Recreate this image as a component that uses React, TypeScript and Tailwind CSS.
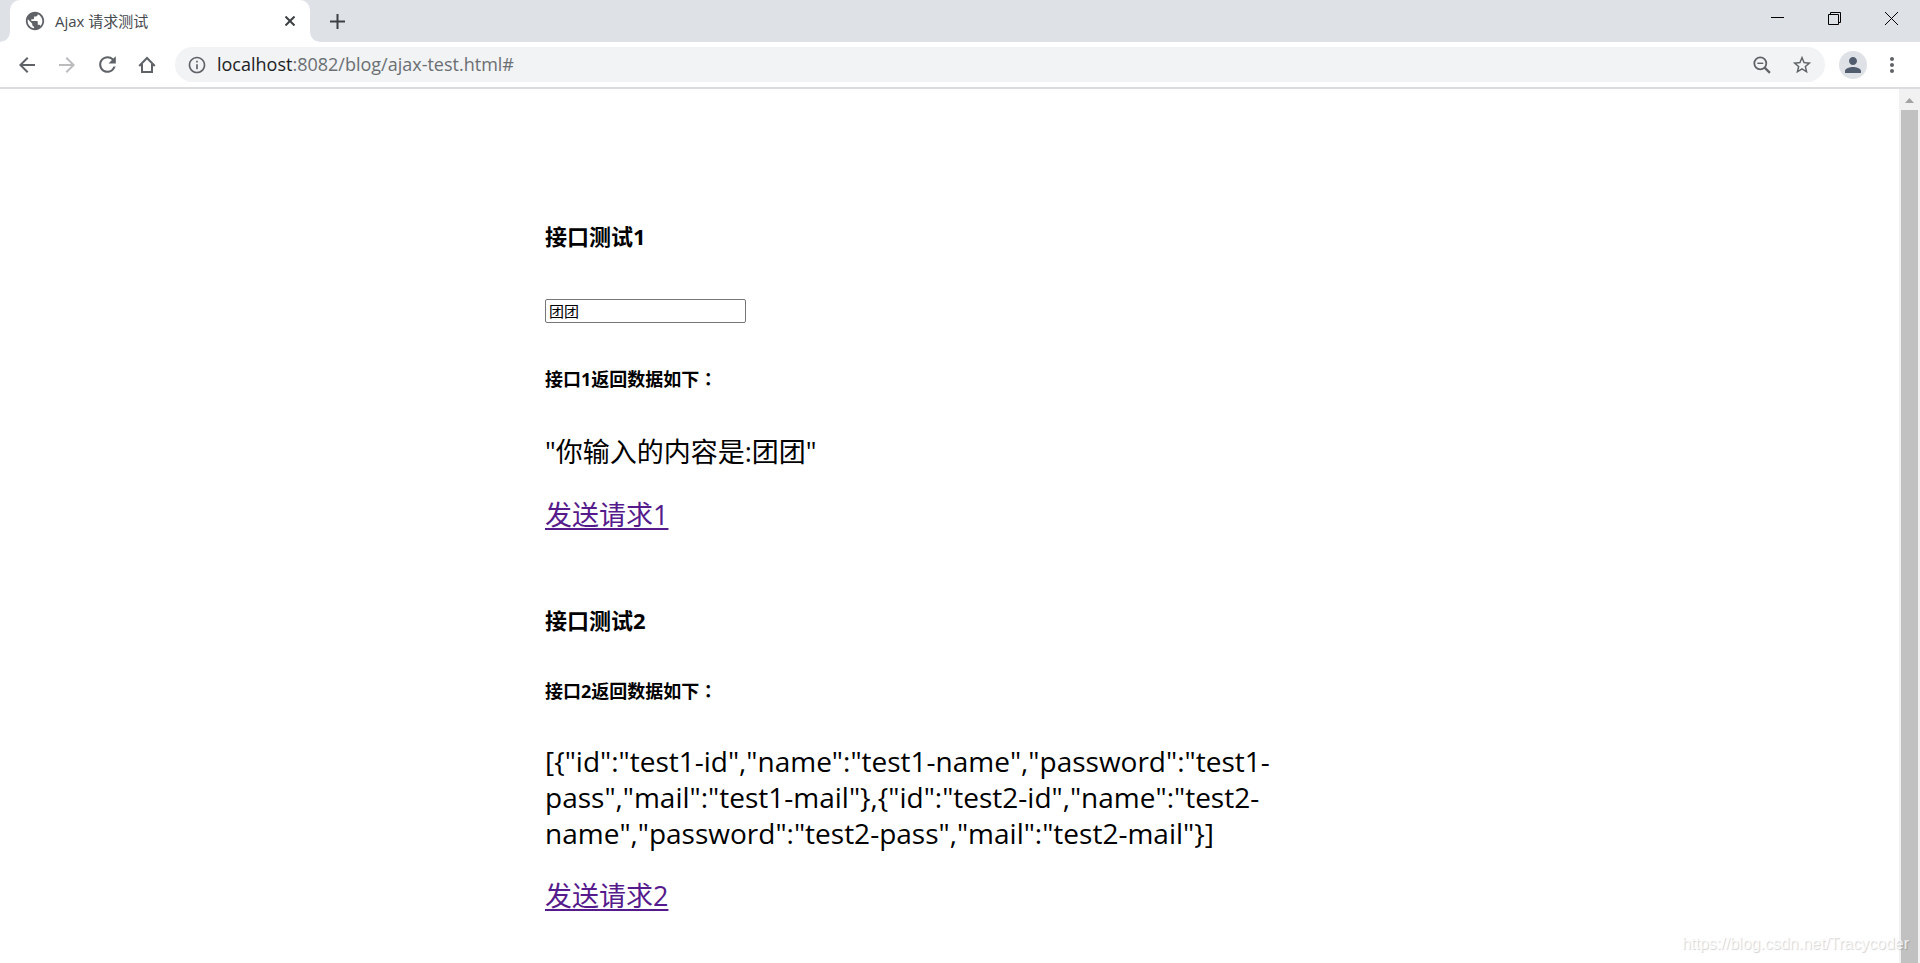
import { useState } from "react";
import type { ReactNode } from "react";
import {
  MdArrowBack,
  MdArrowForward,
  MdInfoOutline,
  MdMoreVert,
  MdOutlineStarBorder,
  MdPerson,
  MdPublic,
  MdRefresh,
} from "react-icons/md";

function IconButton({ label, children }: { label: string; children: ReactNode }) {
  return (
    <button
      type="button"
      aria-label={label}
      className="flex h-8 w-10 shrink-0 items-center justify-center text-[#5f6368]"
    >
      {children}
    </button>
  );
}

function TabStrip() {
  return (
    <header className="flex h-[42px] items-stretch bg-[#dee1e6]">
      <div className="w-[10px] bg-white">
        <div className="h-full rounded-br-[10px] bg-[#dee1e6]" />
      </div>
      <div className="bg-[#dee1e6]">
        <div className="flex h-full w-[300px] items-center gap-[9px] rounded-t-[10px] bg-white pr-[14px] pl-[14px]">
          <MdPublic size={22} className="shrink-0 text-[#5f6368]" />
          <span className="flex-1 text-[15px] leading-5 text-[#45494d]">Ajax 请求测试</span>
          <button type="button" aria-label="关闭标签页" className="p-[1px]">
            <svg viewBox="0 0 10 10" className="size-[10px]" stroke="#3c4043" strokeWidth="2" aria-hidden="true">
              <path d="M0.5 0.5 L9.5 9.5 M9.5 0.5 L0.5 9.5" />
            </svg>
          </button>
        </div>
      </div>
      <div className="w-[10px] bg-white">
        <div className="h-full rounded-bl-[10px] bg-[#dee1e6]" />
      </div>
      <button type="button" aria-label="打开新的标签页" className="flex w-[35px] items-center justify-center">
        <svg viewBox="0 0 15 15" className="size-[15px]" stroke="#3c4043" strokeWidth="2" aria-hidden="true">
          <path d="M7.5 0 V15 M0 7.5 H15" />
        </svg>
      </button>
      <div className="flex-1" />
      <div className="flex h-9 items-center">
        <button type="button" aria-label="最小化" className="flex w-[57px] justify-center">
          <svg viewBox="0 0 13 13" className="size-[13px]" stroke="#000" fill="none" aria-hidden="true">
            <path d="M0 5.5 H13" />
          </svg>
        </button>
        <button type="button" aria-label="还原" className="flex w-[57px] justify-center">
          <svg viewBox="0 0 13 13" className="size-[13px]" stroke="#000" fill="none" aria-hidden="true">
            <path d="M0.5 2.5 H10.5 V12.5 H0.5 Z M2.5 2.5 V0.5 H12.5 V10.5 H10.5" />
          </svg>
        </button>
        <button type="button" aria-label="关闭" className="flex w-[57px] justify-center">
          <svg viewBox="0 0 13 13" className="size-[13px]" stroke="#000" fill="none" aria-hidden="true">
            <path d="M0 0 L13 13 M13 0 L0 13" />
          </svg>
        </button>
      </div>
    </header>
  );
}

function Toolbar() {
  return (
    <nav className="flex h-[47px] items-center border-b-2 border-[#dadce0] bg-white pl-[7px]">
      <IconButton label="后退">
        <MdArrowBack size={24} />
      </IconButton>
      <IconButton label="前进">
        <MdArrowForward size={24} className="text-[#babcbe]" />
      </IconButton>
      <IconButton label="重新加载">
        <MdRefresh size={25} />
      </IconButton>
      <IconButton label="主页">
        <svg viewBox="0 0 18 18" className="size-[18px]" fill="none" stroke="#5f6368" strokeWidth="2" aria-hidden="true">
          <path d="M1.2 10 L9 2 L16.8 10 M4 8 V16 H14 V8" />
        </svg>
      </IconButton>
      <div className="ml-2 flex h-[35px] flex-1 items-center rounded-full bg-[#f1f3f4] pr-[3px] pl-3">
        <MdInfoOutline size={20} className="shrink-0 text-[#5f6368]" />
        <a href="#" className="ml-[10px] flex-1 pb-[2px] text-[18px] leading-6 text-[#6b6f73]">
          <span className="text-[#202124]">localhost</span>:8082/blog/ajax-test.html#
        </a>
        <IconButton label="缩放">
          <svg viewBox="0 0 18 18" className="size-[18px]" fill="none" stroke="#5f6368" aria-hidden="true">
            <circle cx="7.3" cy="7.3" r="6" strokeWidth="1.8" />
            <path d="M4.3 7.3 H10.3" strokeWidth="1.4" />
            <path d="M11.4 11.4 L16.9 16.9" strokeWidth="2.2" />
          </svg>
        </IconButton>
        <IconButton label="为此网页添加书签">
          <MdOutlineStarBorder size={22} />
        </IconButton>
      </div>
      <button
        type="button"
        aria-label="个人资料"
        className="ml-[14px] flex size-7 items-center justify-center rounded-full bg-[#dee1e6] text-[#515c6f]"
      >
        <MdPerson size={24} />
      </button>
      <span className="mr-2 ml-[5px] flex">
        <IconButton label="自定义及控制">
          <MdMoreVert size={24} />
        </IconButton>
      </span>
    </nav>
  );
}

const titleClass = "text-[22px] leading-[30px] font-bold";
const linkClass = "text-[27px] leading-9 text-[#551a8b] underline decoration-2 underline-offset-[3px]";

function Subtitle({ text }: { text: string }) {
  return (
    <h5 className="mt-[43px] text-[18px] leading-6 font-bold">
      {text}
      <span className="font-['Noto_Sans_CJK_TC',sans-serif]" lang="zh-TW">：</span>
    </h5>
  );
}

function TestPage() {
  const [value, setValue] = useState("团团");
  return (
    <main className="flex-1 px-8 pt-[132px] text-black">
      <div className="mx-auto max-w-[809px]">
        <section>
          <h3 className={titleClass}>接口测试1</h3>
          <input
            type="text"
            aria-label="接口测试1"
            value={value}
            onChange={(e) => setValue(e.target.value)}
            className="mt-12 block h-6 w-[201px] rounded-[2px] border border-[#767676] px-[3px] pb-[2px] text-[15px] leading-5"
          />
          <Subtitle text="接口1返回数据如下" />
          <p className="mt-[43px] text-[27px] leading-9">"你输入的内容是:团团"</p>
          <p className="mt-[27px]">
            <a href="#" className={linkClass}>发送请求1</a>
          </p>
        </section>
        <section className="mt-[72px]">
          <h3 className={titleClass}>接口测试2</h3>
          <Subtitle text="接口2返回数据如下" />
          <p className="mt-10 text-[28px] leading-9">
            {'[{"id":"test1-id","name":"test1-name","password":"test1-pass","mail":"test1-mail"},{"id":"test2-id","name":"test2-name","password":"test2-pass","mail":"test2-mail"}]'}
          </p>
          <p className="mt-[27px]">
            <a href="#" className={linkClass}>发送请求2</a>
          </p>
        </section>
      </div>
    </main>
  );
}

export default function App() {
  return (
    <div className="relative flex h-screen flex-col overflow-hidden bg-white font-['Open_Sans','Noto_Sans_CJK_SC',sans-serif]">
      <TabStrip />
      <Toolbar />
      <div className="flex min-h-0 flex-1">
        <TestPage />
        <div className="flex w-[21px] flex-col items-center bg-[#f1f1f1]" aria-hidden="true">
          <svg viewBox="0 0 9 5" className="mt-[9px] mb-[7px] h-[5px] w-[9px] shrink-0" fill="#a3a3a3">
            <path d="M4.5 0 L9 5 H0 Z" />
          </svg>
          <div className="w-[17px] flex-1 bg-[#c1c1c1]" />
        </div>
      </div>
      <span className="absolute right-[11px] bottom-[9px] font-['Liberation_Sans',sans-serif] text-[16px] leading-5 text-white/80 [text-shadow:1px_1px_1px_rgb(0_0_0/0.18)]">
        https://blog.csdn.net/Tracycoder
      </span>
    </div>
  );
}
